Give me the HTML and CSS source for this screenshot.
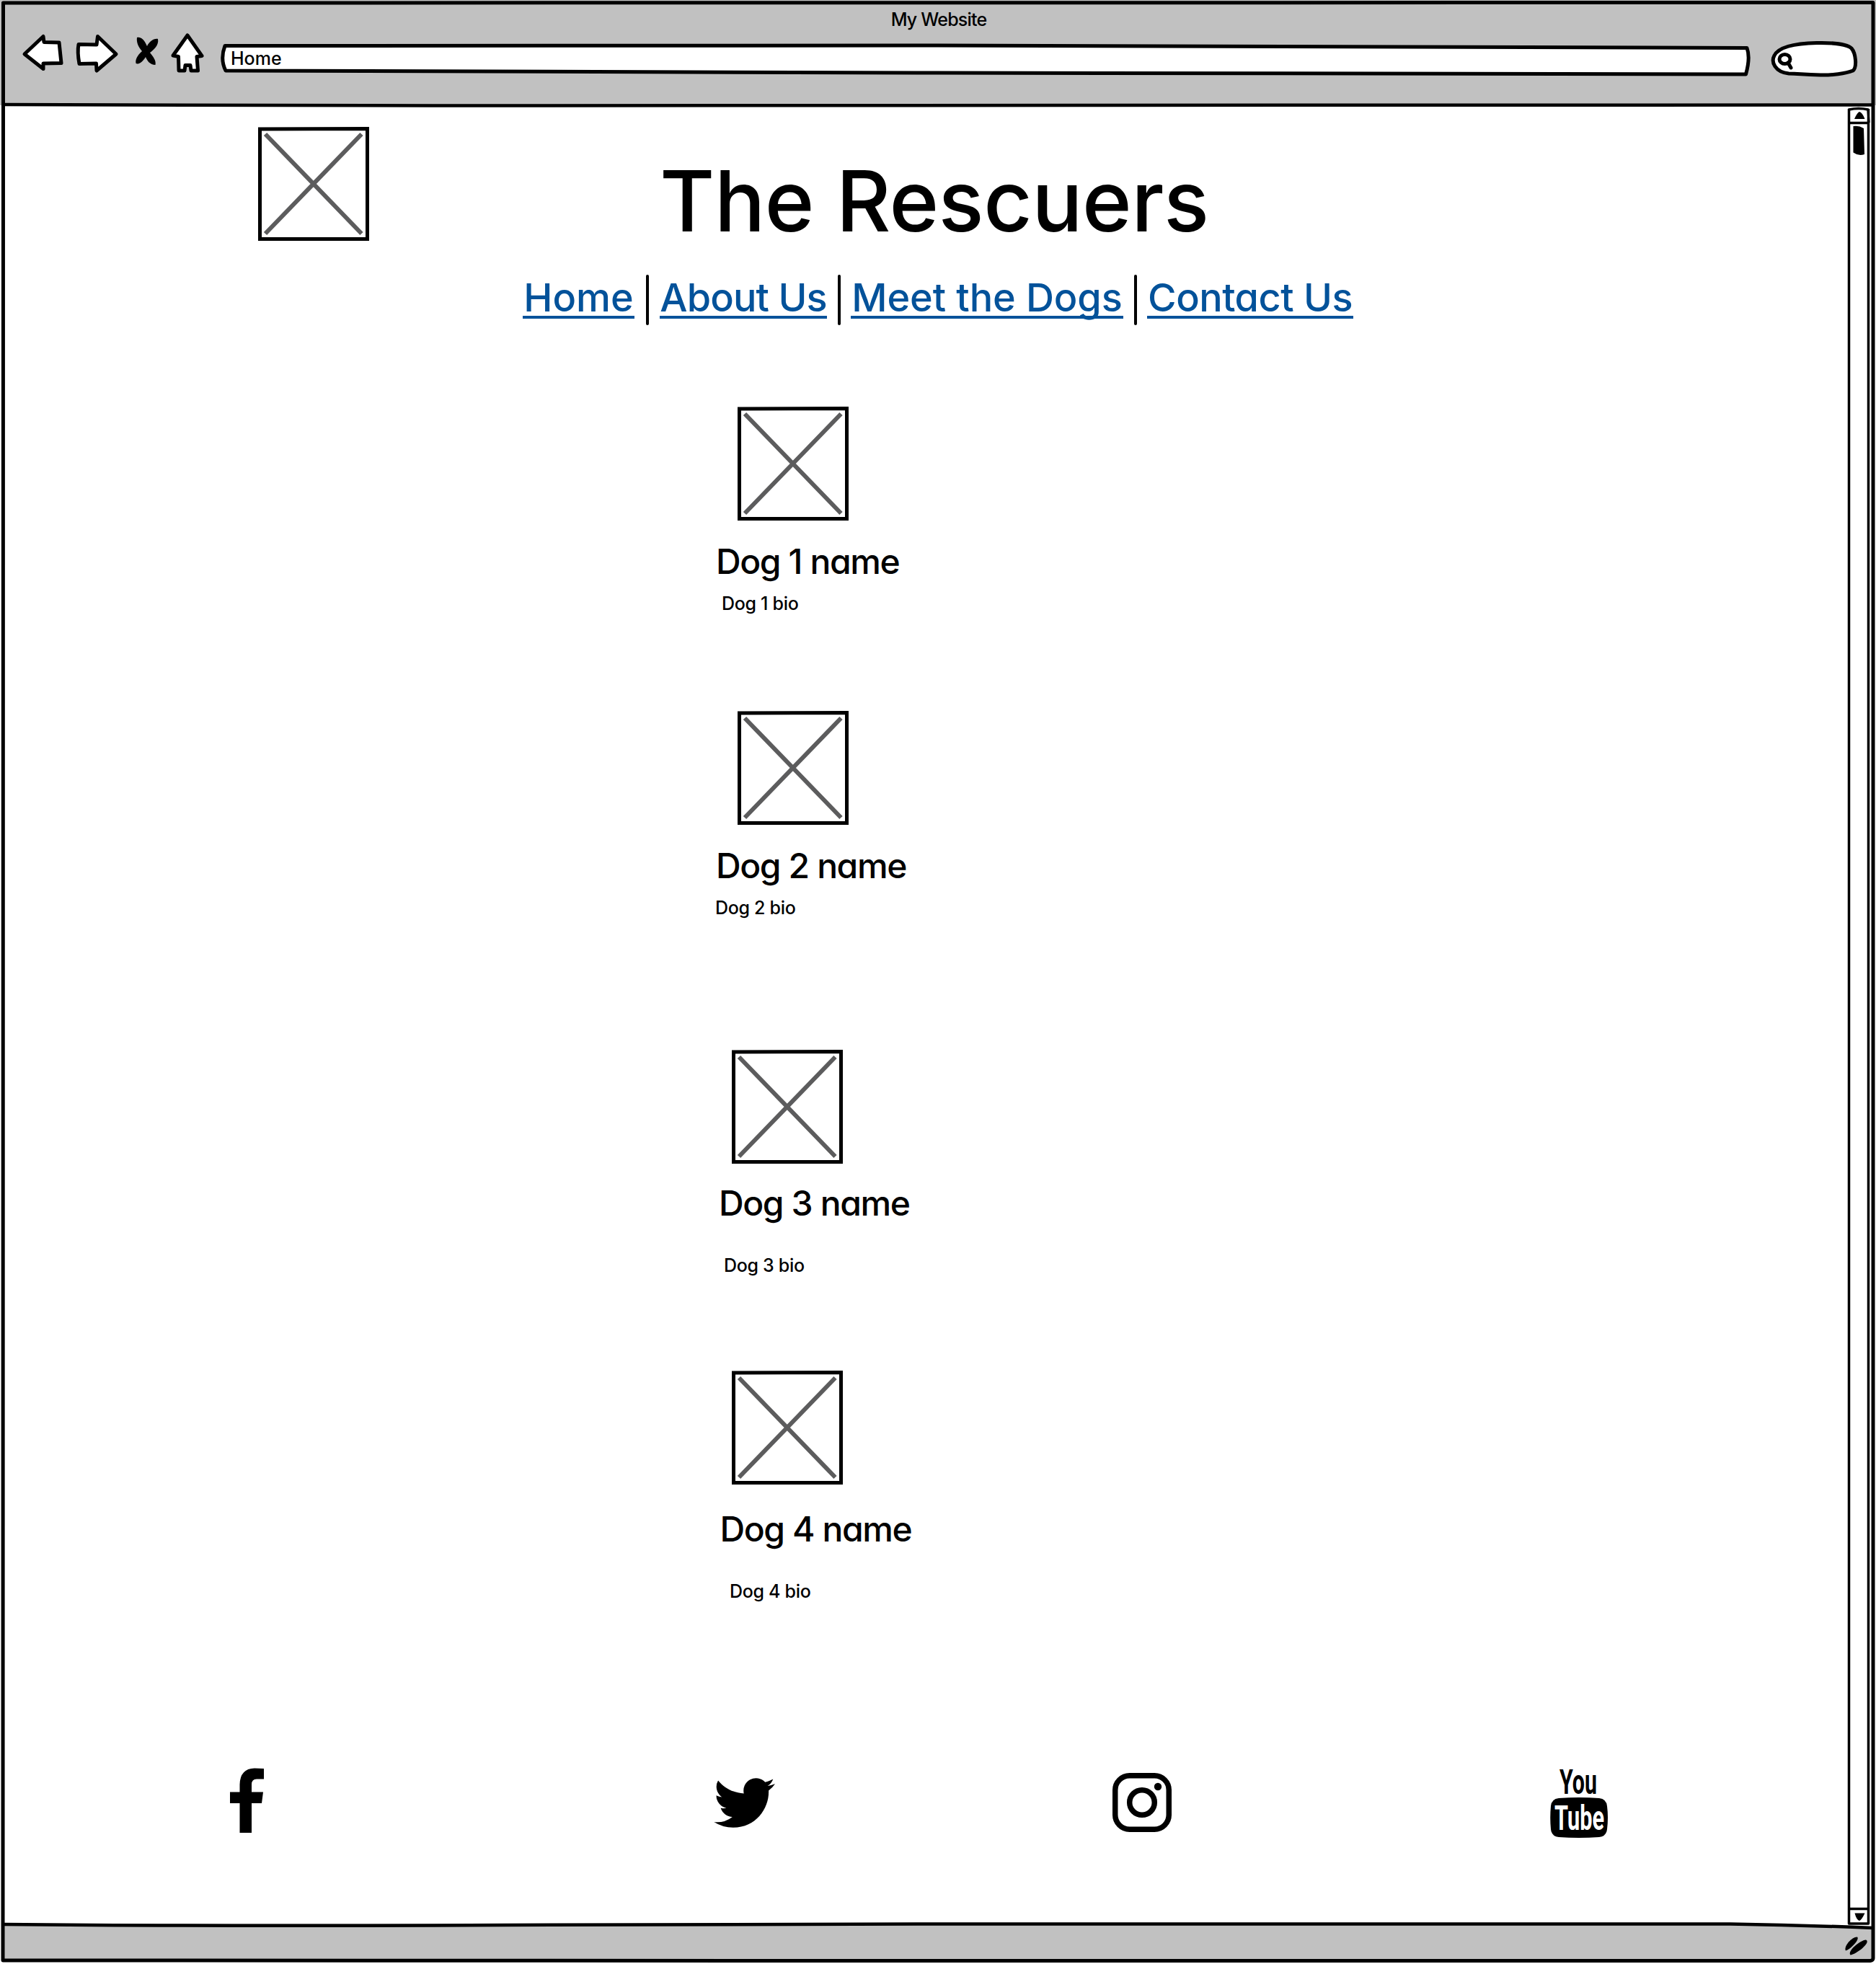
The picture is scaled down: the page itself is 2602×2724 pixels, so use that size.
FILE: index.html
```html
<!DOCTYPE html>
<html lang="en">
<head>
<meta charset="utf-8">
<title>My Website</title>
<link rel="stylesheet" href="styles.css">
</head>
<body>
<svg width="0" height="0" class="defs">
  <symbol id="placeholder" viewBox="0 0 154 158">
    <path d="M2.500 3 L151.500 2.500 V155.500 H2.500 Z" fill="#fff" stroke="#000" stroke-width="5"/>
    <path d="M10 10 L143.500 148 M143.500 10 L10 148" stroke="#5c5c5d" stroke-width="6"/>
  </symbol>
</svg>
<div class="window">
  <header class="chrome">
    <div class="window-title">My Website</div>
    <div class="toolbar">
      <svg class="ico back" viewBox="30 44 68 64"><path d="M34 75 L60 50.500 L61 58.500 L82 59 L85 87.500 L60 88 L60 95.500 Z"/></svg>
      <svg class="ico forward" viewBox="98 44 72 64"><path d="M109 61.500 L134 62 L135.500 50.500 L161 75 L134 98 L133.500 88 L110 88.500 Q107 72 109 61.500 Z"/></svg>
      <svg class="ico stop" viewBox="170 44 62 64"><path class="solid" d="M190 52 C198 50 202 60 204 64 C207 58 213 53 219 54 C221 63 212 70 208 73 C212 78 217 84 215.500 90 C208 90 204 84 202 79 C199 84 194 90 188.500 88 C187 80 194 74 197 71 C192 65 189 59 190 52 Z"/></svg>
      <svg class="ico home" viewBox="232 44 72 64"><path d="M260 49 L280 77.500 L273 78.500 L274.500 98 L265 98 L264 90.500 L257 90.500 L256 98 L248 98 L247.500 78.500 L240 77 Z"/></svg>
      <div class="address">
        <svg viewBox="304 56 2130 52"><path d="M312 63.500 L1300 63 L2423 66.500 Q2428 80 2421.500 103 L1300 101 L313 98 Q305 82 312 63.500 Z"/></svg>
        <span>Home</span>
      </div>
      <svg class="ico search" viewBox="2450 52 140 60"><path d="M2481 102 C2462 100 2456 86 2461 77 C2468 63 2495 60 2520 59.500 C2545 59 2563 62 2568 67 C2574 74 2576 93 2570 98 C2560 102 2540 104.500 2525 104 C2500 103.500 2495 102 2481 102 Z"/><ellipse cx="2475.500" cy="82" rx="7.500" ry="6.500"/><path d="M2480 87 L2484 94"/></svg>
    </div>
  </header>

  <main class="page">
    <div class="banner">
      <svg class="pic"><use href="#placeholder"/></svg>
      <h1>The Rescuers</h1>
    </div>
    <nav class="links">
      <a class="link-home">Home</a><i></i>
      <a class="link-about">About Us</a><i></i>
      <a class="link-dogs">Meet the Dogs</a><i></i>
      <a class="link-contact">Contact Us</a>
    </nav>
    <article class="dog dog1"><svg class="pic"><use href="#placeholder"/></svg><h2>Dog 1 name</h2><p>Dog 1 bio</p></article>
    <article class="dog dog2"><svg class="pic"><use href="#placeholder"/></svg><h2>Dog 2 name</h2><p>Dog 2 bio</p></article>
    <article class="dog dog3"><svg class="pic"><use href="#placeholder"/></svg><h2>Dog 3 name</h2><p>Dog 3 bio</p></article>
    <article class="dog dog4"><svg class="pic"><use href="#placeholder"/></svg><h2>Dog 4 name</h2><p>Dog 4 bio</p></article>
    <div class="social">
      <svg class="facebook" viewBox="319 2452 47 90"><path d="M366 2453 V2467.500 H356 Q349 2467.500 349 2475 V2485.500 H365 L363 2501 H349 V2542 H332.500 V2501 H319 V2485.500 H332.500 V2475 Q333 2453 353 2452.500 Z"/></svg>
      <svg class="twitter" viewBox="0 2.200 24 19.600"><path d="M23.953 4.570a10 10 0 01-2.825.775 4.958 4.958 0 002.163-2.723c-.951.555-2.005.959-3.127 1.184a4.920 4.920 0 00-8.384 4.482C7.690 8.095 4.067 6.130 1.640 3.162a4.822 4.822 0 00-.666 2.475c0 1.710.870 3.213 2.188 4.096a4.904 4.904 0 01-2.228-.616v.060a4.923 4.923 0 003.946 4.827 4.996 4.996 0 01-2.212.085 4.936 4.936 0 004.604 3.417 9.867 9.867 0 01-6.102 2.105c-.390 0-.779-.023-1.170-.067a13.995 13.995 0 007.557 2.209c9.053 0 13.998-7.496 13.998-13.985 0-.210 0-.420-.015-.630A9.935 9.935 0 0024 4.590z"/></svg>
      <svg class="instagram" viewBox="0 0 82 82"><rect x="3.750" y="3.750" width="74.500" height="74.500" rx="20" fill="none" stroke="#000" stroke-width="7.500"/><circle cx="41" cy="41" r="17.300" fill="none" stroke="#000" stroke-width="7.500"/><circle cx="63" cy="19" r="5.200"/></svg>
      <svg class="youtube" viewBox="2149 2450 80 100"><path d="M2161 2494 Q2189 2492 2217 2494 Q2227 2495 2228 2505 Q2230 2521 2228 2537 Q2227 2547 2217 2548 Q2189 2550 2161 2548 Q2151 2547 2150 2537 Q2148.500 2521 2150 2505 Q2151 2495 2161 2494 Z"/><text x="2162" y="2488" textLength="52" lengthAdjust="spacingAndGlyphs">You</text><text class="tube" x="2155" y="2538" textLength="69" lengthAdjust="spacingAndGlyphs">Tube</text></svg>
    </div>
  </main>

  <svg class="frame" viewBox="0 0 2602 2724">
    <path class="grey" d="M4 2668 L2400 2668 Q2500 2670 2598 2674 V2720 H4 Z"/>
    <path d="M4.500 4 L2598 3.500 V2716 Q2598 2719 2594 2719.500 L1300 2719.500 L4 2719 Z" stroke-width="5"/>
    <path d="M5 145 Q200 146 600 146.500 L1500 146 Q2000 145.500 2598 145.500" stroke-width="4.500"/>
    <path d="M5 2669 Q300 2672 700 2670 L1300 2668.500 H2400 Q2500 2670 2598 2674" stroke-width="4.500"/>
    <path d="M2564.500 170 V152 Q2578 149 2591 152 L2592 170 M2564.500 151 V2668 H2591.500 V151 M2564 170.500 H2592 M2565 2647.500 H2592" stroke-width="3.500"/>
    <path class="mark" d="M2572 165 Q2576 156 2579 155 Q2583 156 2586.500 165 Z M2572.500 2653.500 H2586.500 Q2582 2663 2579 2664 Q2575 2663 2572.500 2653.500 Z M2570.500 175 Q2578 173.500 2585 178 L2586 214 Q2578 217 2570.500 211.500 Z"/>
    <path class="mark" d="M2560 2705.500 C2557 2699 2569 2686 2576 2686.500 C2580 2690 2566 2704 2560 2705.500 Z M2566.500 2711.500 C2562 2706 2580 2691 2588 2690.500 C2596 2694 2574 2711 2566.500 2711.500 Z"/>
  </svg>
</div>
</body>
</html>
```
FILE: styles.css
```css
* { box-sizing: border-box; }
body { margin: 0; font-family: "Inter", sans-serif; font-feature-settings: "cv11"; color: #000; background: #fff; }
.defs { position: absolute; }
h1, h2, p { margin: 0; font-weight: 500; white-space: nowrap; }

.window { position: relative; width: 2602px; height: 2724px; overflow: hidden; display: flex; flex-direction: column; }
.frame { position: absolute; inset: 0; width: 2602px; height: 2724px; fill: none; stroke: #000; stroke-linejoin: round; pointer-events: none; }
.frame .grey { fill: #c1c1c1; stroke: none; }
.frame .mark { fill: #000; stroke: none; }

/* browser chrome */
.chrome { height: 146px; background: #c1c1c1; }
.window-title { height: 44px; padding: 10px 0 0 2px; line-height: 34px; text-align: center; font-size: 25px; font-weight: 500; letter-spacing: -0.8px; }
.toolbar { display: flex; padding-left: 30px; }
.ico, .address svg { fill: #fff; stroke: #000; stroke-width: 5; stroke-linejoin: round; stroke-linecap: round; }
.ico .solid { fill: #000; stroke: none; }
.back { width: 68px; height: 64px; }
.forward { width: 72px; height: 64px; }
.stop { width: 62px; height: 64px; }
.home { width: 72px; height: 64px; }
.address { display: grid; width: 2130px; height: 52px; margin-top: 12px; font-size: 25px; font-weight: 500; }
.address svg, .address span { grid-area: 1 / 1; }
.address svg { width: 2130px; height: 52px; }
.address span { padding-left: 16px; line-height: 50px; }
.search { width: 140px; height: 60px; margin: 8px 0 0 16px; }

/* page */
.page { display: flex; flex-direction: column; padding-top: 30px; }
.pic { display: block; width: 154px; height: 158px; }
.banner { display: flex; height: 158px; padding-left: 358px; }
h1 { margin: 43px 0 0 403px; font-size: 117px; line-height: 120px; letter-spacing: -0.5px; }
.links { display: flex; height: 72px; margin-top: 46px; padding-left: 725px; font-size: 54px; font-weight: 500; color: #03529a; }
.links a { height: 62px; line-height: 65px; text-align: center; white-space: nowrap; border-bottom: 4px solid #03529a; }
.links i { width: 4px; height: 70px; margin: 1px 14px 0 15px; border-radius: 2px; background: #000; }
.links .link-home + i { margin: 1px 15px 0 16px; }
.link-home { width: 155px; }
.link-about { width: 232px; letter-spacing: -0.9px; }
.link-dogs { width: 378px; letter-spacing: -0.1px; }
.link-contact { width: 286px; letter-spacing: -0.5px; }

.dog h2 { position: relative; top: 1px; height: 60px; font-size: 48px; line-height: 60px; letter-spacing: -1.4px; }
.dog p { height: 30px; font-size: 25px; line-height: 30px; letter-spacing: -0.3px; }
.dog1 { margin-top: 112px; }
.dog1 .pic, .dog2 .pic { margin-left: 1022.5px; }
.dog1 h2, .dog2 h2 { margin: 26px 0 0 993px; }
.dog1 p { margin: 14px 0 0 1001px; }
.dog2 { margin-top: 134px; }
.dog2 p { margin: 14px 0 0 992px; }
.dog3 { margin-top: 182px; }
.dog3 .pic, .dog4 .pic { margin-left: 1015px; }
.dog3 h2 { margin: 24px 0 0 997px; }
.dog3 p { margin: 42px 0 0 1004px; }
.dog4 { margin-top: 131px; }
.dog4 h2 { margin: 31px 0 0 998.5px; }
.dog4 p { margin: 42px 0 0 1012px; }

.social { display: flex; height: 100px; margin-top: 228px; padding-left: 319px; }
.facebook { width: 47px; height: 90px; margin-top: 2px; }
.twitter { width: 85px; height: 69px; margin: 16px 0 0 624px; }
.instagram { width: 82px; height: 82px; margin: 9px 0 0 468px; }
.youtube { width: 80px; height: 100px; margin-left: 525px; overflow: visible; font: 700 48px "Roboto", sans-serif; }
.youtube .tube { fill: #fff; }
```
